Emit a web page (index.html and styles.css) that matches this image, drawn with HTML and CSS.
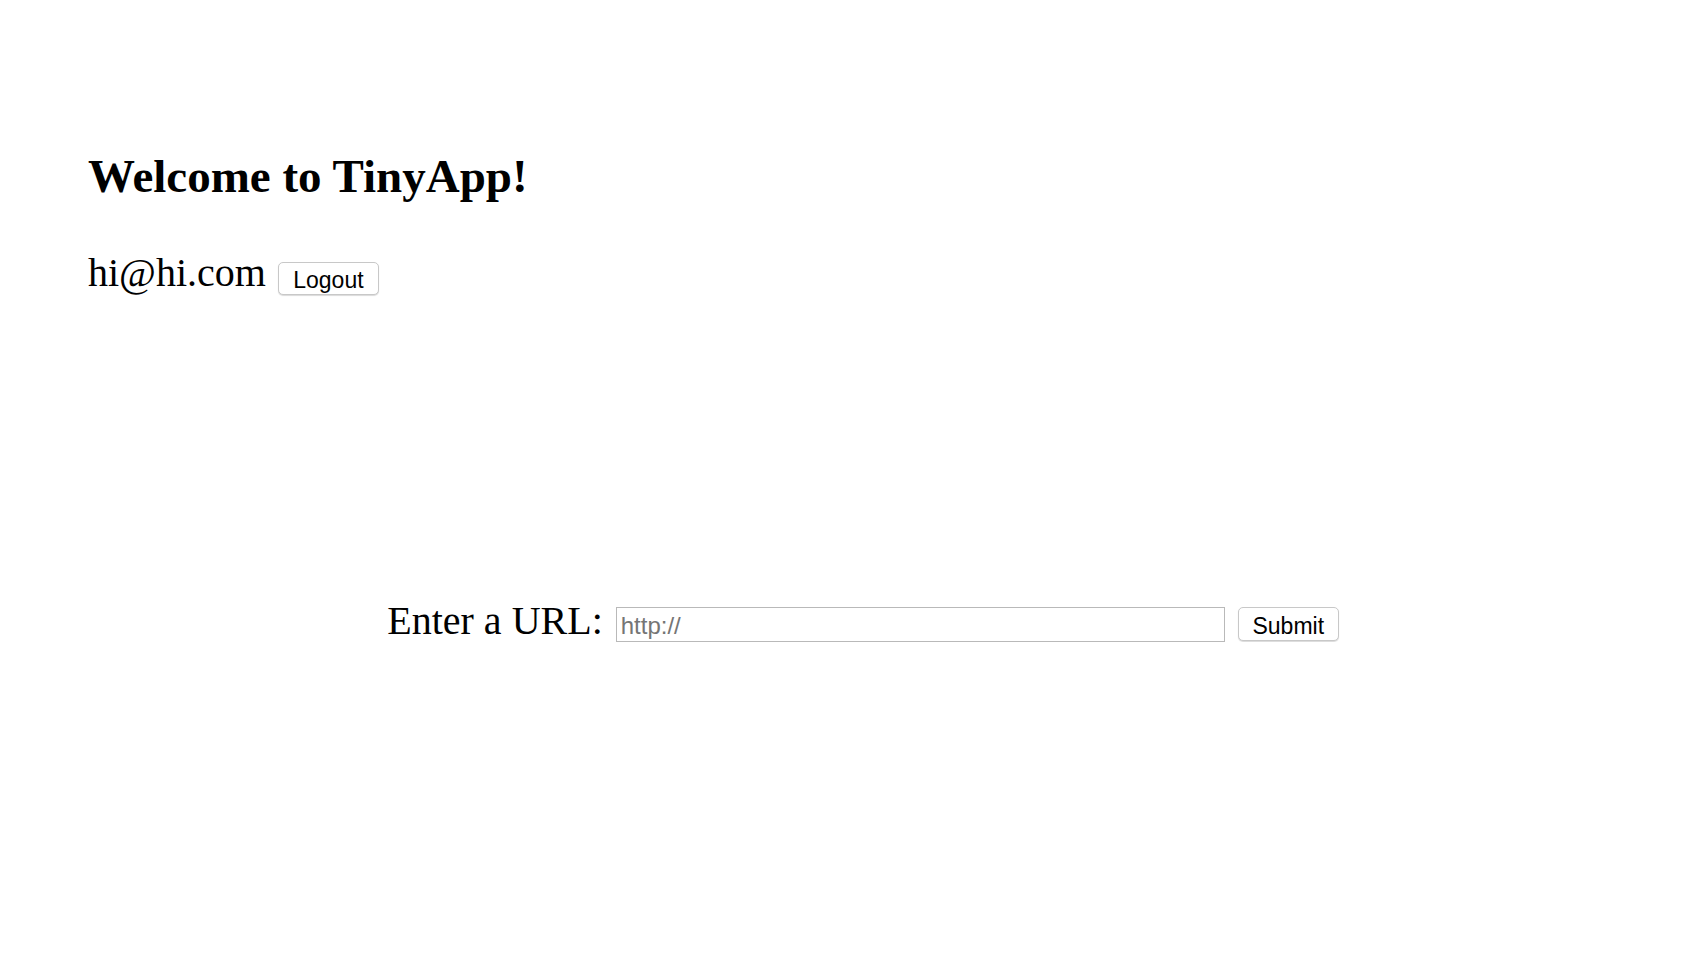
FILE: index.html
```html
<!DOCTYPE html>
<html>
<head>
<meta charset="utf-8">
<link rel="stylesheet" href="styles.css">
</head>
<body>
  <header class="header">
    <h1 class="title">Welcome to TinyApp!</h1>
    <div class="user-row">
      <span class="user-email">hi@hi.com</span>
      <button class="btn btn-logout" type="button">Logout</button>
    </div>
  </header>
  <main class="main">
    <form class="url-form">
      <label class="url-label" for="url">Enter a URL:</label>
      <input class="url-input" id="url" type="text" placeholder="http://">
      <button class="btn btn-submit" type="button">Submit</button>
    </form>
  </main>
</body>
</html>
```

FILE: styles.css
```css
html, body {
  margin: 0;
  padding: 0;
  background: #ffffff;
  color: #000000;
  font-family: "Liberation Serif", "Times New Roman", serif;
}

.header {
  padding: 153px 0 0 88px;
  display: flex;
  flex-direction: column;
}

.title {
  margin: 0;
  font-size: 47px;
  font-weight: bold;
  line-height: 1;
}

.user-row {
  margin-top: 53px;
  display: flex;
  align-items: flex-start;
  gap: 12px;
}

.user-email {
  font-size: 40px;
  line-height: 1;
}

.btn {
  font-family: "Liberation Sans", Arial, sans-serif;
  font-size: 23px;
  color: #000;
  background: #ffffff;
  border: 1px solid #c8c8c8;
  border-radius: 5px;
  box-shadow: 0 1px 1px rgba(0, 0, 0, 0.15);
  padding: 3px 0 0 0;
  width: 101px;
  height: 33px;
  line-height: 28px;
  box-sizing: border-box;
  cursor: pointer;
}

.btn-logout {
  margin-top: 9px;
}

.main {
  padding-top: 306px;
  display: flex;
  justify-content: center;
}

.url-form {
  margin-left: 18px;
  display: flex;
  align-items: flex-start;
}

.url-label {
  font-size: 40px;
  line-height: 1;
}

.url-input {
  margin-left: 13px;
  margin-top: 6px;
  width: 609px;
  height: 35px;
  box-sizing: border-box;
  border: 1px solid #b9b9b9;
  padding: 2px 4px 0 4px;
  font-family: "Liberation Sans", Arial, sans-serif;
  font-size: 24px;
  outline: none;
}

.url-input::placeholder {
  color: #757575;
}

.btn-submit {
  margin-left: 13px;
  margin-top: 6px;
  height: 34px;
}
```
